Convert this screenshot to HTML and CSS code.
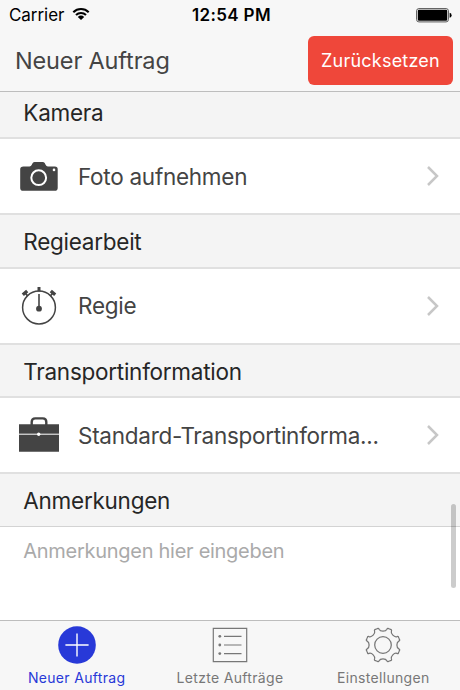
FILE: index.html
```
<!DOCTYPE html>
<html lang="de">
<head>
<meta charset="utf-8">
<title>Neuer Auftrag</title>
<link rel="stylesheet" href="styles.css">
</head>
<body>
<div class="app">
  <header class="top">
    <div class="status">
      <div class="carrier"><span>Carrier</span>
        <svg width="18" height="14" viewBox="0 0 18 14"><path d="M1.3 5.2a11 11 0 0 1 15.4 0M4 8a7.2 7.2 0 0 1 10 0" fill="none" stroke="#000" stroke-width="2.1"/><path d="M5.8 9.9a4.6 4.6 0 0 1 6.400 0L9 13z"/></svg>
      </div>
      <div class="clock">12:54 PM</div>
      <svg class="battery" width="36" height="15" viewBox="0 0 36 15"><rect x=".6" y=".6" width="31.8" height="13.3" rx="2.3" fill="#fff" stroke="#555" stroke-width="1"/><rect x="1.8" y="1.8" width="29.4" height="10.9" rx="1.2"/><path d="M33.6 4.8q2 .4 2 2.5t-2 2.5z"/></svg>
    </div>
    <div class="nav">
      <h1>Neuer Auftrag</h1>
      <button class="reset">Zurücksetzen</button>
    </div>
  </header>
  <main class="content">
    <h2 class="section first">Kamera</h2>
    <div class="row">
      <svg class="icon" width="42" height="42" viewBox="0 -1.400 42 42"><path fill="#444" d="M5.500 10h6q1.600 0 2.300-1.600l.9-1.700q.7-1.200 2-1.200h7.900q1.400 0 2.100 1.200l.9 1.700q.7 1.600 2.300 1.600h7q2.800 0 2.800 2.800v18.700q0 2.800-2.800 2.800H5q-2.800 0-2.800-2.800V12.800Q2.200 10 5.500 10z"/><circle cx="20.700" cy="21.300" r="7.400" fill="none" stroke="#fff" stroke-width="2"/><circle cx="36" cy="13.500" r="1.300" fill="#fff"/></svg>
      <span class="label">Foto aufnehmen</span>
      <svg class="chev" width="14" height="22" viewBox="0 0 14 22"><path d="M2 2l9 9-9 9" fill="none" stroke="#c7c7c7" stroke-width="2.500"/></svg>
    </div>
    <h2 class="section">Regiearbeit</h2>
    <div class="row">
      <svg class="icon" width="42" height="42" viewBox="0 0 42 42"><g fill="none" stroke="#444"><circle cx="21" cy="22.500" r="16.400" stroke-width="1.500"/><path d="M21 9v14" stroke-width="1.600"/><path d="M21 2v4.500" stroke-width="3"/><path d="M4.800 9.800l4.400-3.800M37.200 9.800l-4.400-3.800" stroke-width="3.300"/><path d="M7.200 8l2.500 3M34.800 8l-2.500 3" stroke-width="1.800"/></g><circle cx="21" cy="23.700" r="2.900" fill="#444"/></svg>
      <span class="label">Regie</span>
      <svg class="chev" width="14" height="22" viewBox="0 0 14 22"><path d="M2 2l9 9-9 9" fill="none" stroke="#c7c7c7" stroke-width="2.500"/></svg>
    </div>
    <h2 class="section">Transportinformation</h2>
    <div class="row">
      <svg class="icon" width="42" height="42" viewBox="0 0 42 42"><path d="M13.700 11V8q0-3.600 3.600-3.600h7.400q3.600 0 3.600 3.600v3" fill="none" stroke="#444" stroke-width="2.400"/><path fill="#444" d="M1 10.300h40v27.400H1z"/><path d="M1 20.200h40" stroke="#fff" stroke-width="1"/><circle cx="20.700" cy="20.200" r="1.700" fill="#fff"/></svg>
      <span class="label">Standard-Transportinforma...</span>
      <svg class="chev" width="14" height="22" viewBox="0 0 14 22"><path d="M2 2l9 9-9 9" fill="none" stroke="#c7c7c7" stroke-width="2.500"/></svg>
    </div>
    <h2 class="section last">Anmerkungen</h2>
    <div class="notes">Anmerkungen hier eingeben</div>
    <div class="scrollbar"></div>
  </main>
  <nav class="tabs">
    <div class="tab active">
      <svg width="38" height="38" viewBox="0 0 38 38"><circle cx="19" cy="19" r="18.800" fill="#2839d8"/><path d="M19 7.400v23.200M7.400 19h23.200" stroke="#fff" stroke-width="1.400"/></svg>
      <span>Neuer Auftrag</span>
    </div>
    <div class="tab">
      <svg width="38" height="38" viewBox="0 0 38 38"><g fill="none" stroke="#777" stroke-width="1.200"><path d="M2.300 2.300h33.400v33.400H2.300zM13 10.300h17.500M13 19h17.500M13 27.600h17.500"/></g><g fill="#777"><circle cx="8.800" cy="10.300" r="1.400"/><circle cx="8.800" cy="19" r="1.400"/><circle cx="8.800" cy="27.600" r="1.400"/></g></svg>
      <span>Letzte Aufträge</span>
    </div>
    <div class="tab">
      <svg width="38" height="38" viewBox="-19 -19 38 38"><defs><path id="tooth" d="M-6.600-15.900L-5-16.700Q-4.300-16.800-3.900-15.800Q-3-13.900 0-13.900Q3-13.900 3.900-15.800Q4.300-16.800 5-16.700L6.600-15.900"/></defs><g fill="none" stroke="#777" stroke-width="1.250"><use href="#tooth"/><use href="#tooth" transform="rotate(45)"/><use href="#tooth" transform="rotate(90)"/><use href="#tooth" transform="rotate(135)"/><use href="#tooth" transform="rotate(180)"/><use href="#tooth" transform="rotate(225)"/><use href="#tooth" transform="rotate(270)"/><use href="#tooth" transform="rotate(315)"/><circle r="8.300"/></g></svg>
      <span>Einstellungen</span>
    </div>
  </nav>
</div>
</body>
</html>
```
FILE: styles.css
```
* { box-sizing: border-box; }
body { margin: 0; font-family: Inter, Roboto, "Liberation Sans", sans-serif; background: #fff; }
svg { display: block; flex: none; }
.app { width: 460px; height: 690px; display: flex; flex-direction: column; overflow: hidden; }
.top { height: 92px; flex: none; background: #f7f7f7; border-bottom: 1px solid #bdbdbd; }
.status { height: 30px; display: grid; grid-template-columns: 1fr auto 1fr; align-items: center; padding: 0 8px 0 9px; font-size: 17px; line-height: 30px; color: #000; }
.carrier { display: flex; align-items: center; gap: 8px; letter-spacing: -0.05px; }
.carrier svg { margin-top: -2px; }
.clock { font-weight: 600; letter-spacing: 0.35px; padding-left: 2px; }
.battery { justify-self: end; }
.nav { height: 61px; display: flex; justify-content: space-between; align-items: flex-start; padding: 6px 7px 0 15px; }
h1 { margin: 0; font-size: 23.5px; font-weight: 400; line-height: 50px; color: #444; letter-spacing: -0.15px; }
.reset { width: 145px; height: 49px; border: 0; border-radius: 6px; background: #ef473a; color: #fff; font: 400 18px/49px Inter, sans-serif; letter-spacing: 0.22px; padding: 0; text-align: center; }
.content { position: relative; height: 528px; flex: none; }
.section { margin: 0; height: 53.5px; padding-left: 23.3px; background: #f4f4f4; border-bottom: 2px solid #e0e0e0; font-size: 22.5px; font-weight: 400; line-height: 53px; letter-spacing: -0.26px; color: #262626; }
.first { height: 47px; line-height: 41px; }
.last { height: 53px; border-bottom-width: 1px; border-bottom-color: #d3d3d3; }
.row { height: 76px; display: flex; align-items: center; padding: 0 20px 0 18px; border-bottom: 2px solid #e0e0e0; }
.label { flex: 1; margin-left: 18px; font-size: 22.5px; letter-spacing: -0.27px; color: #444; white-space: nowrap; }
.notes { padding: 9px 23.3px; font-size: 20px; line-height: 30px; letter-spacing: -0.28px; color: #aaa; }
.scrollbar { position: absolute; right: 4px; top: 412px; width: 5px; height: 84px; border-radius: 3px; background: rgba(0,0,0,.2); }
.tabs { height: 70px; flex: none; display: grid; grid-template-columns: repeat(3, 1fr); background: #f7f7f7; border-top: 1px solid #bdbdbd; }
.tab { display: flex; flex-direction: column; align-items: center; padding-top: 5px; font-size: 14px; letter-spacing: 0.32px; color: #777; white-space: nowrap; }
.tab span { line-height: 18px; margin-top: 5px; }
.active { color: #2839d8; }
```
